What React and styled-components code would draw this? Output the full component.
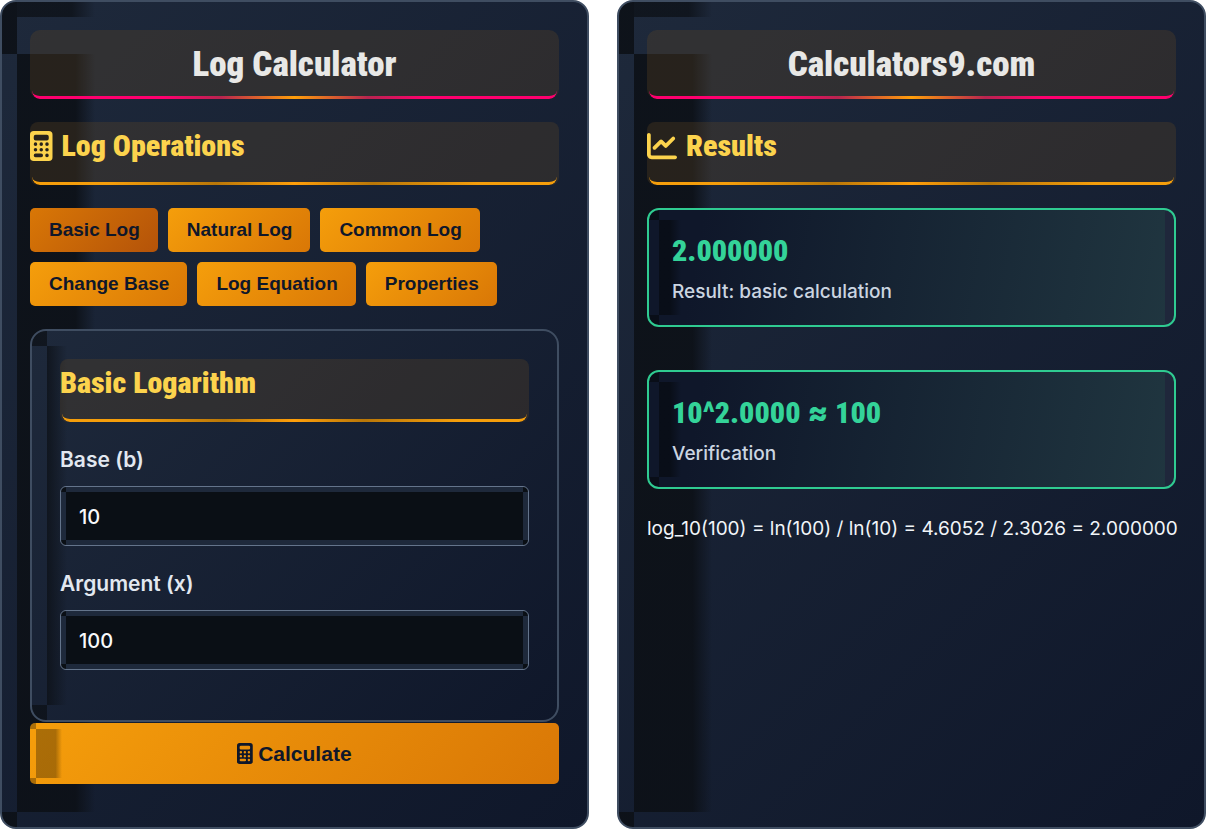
import React, { useState } from "react";
import styled, { createGlobalStyle, css } from "styled-components";

import { FaChartLine } from "react-icons/fa6";

const tabs = [
  "Basic Log",
  "Natural Log",
  "Common Log",
  "Change Base",
  "Log Equation",
  "Properties",
];

function solve(base, argument) {
  const top = Math.log(argument);
  const bottom = Math.log(base);
  return { base, argument, top, bottom, value: top / bottom };
}

function CalculatorIcon() {
  return (
    <NarrowIcon viewBox="0 0 384 512" fill="currentColor" aria-hidden="true">
      <path
        fillRule="evenodd"
        d="M64 0h256a64 64 0 0 1 64 64v384a64 64 0 0 1-64 64H64a64 64 0 0 1-64-64V64A64 64 0 0 1 64 0zM96 64a32 32 0 0 0-32 32v32a32 32 0 0 0 32 32h192a32 32 0 0 0 32-32V96a32 32 0 0 0-32-32zM64 224a30 30 0 1 0 60 0a30 30 0 1 0-60 0zM162 224a30 30 0 1 0 60 0a30 30 0 1 0-60 0zM260 224a30 30 0 1 0 60 0a30 30 0 1 0-60 0zM64 320a30 30 0 1 0 60 0a30 30 0 1 0-60 0zM162 320a30 30 0 1 0 60 0a30 30 0 1 0-60 0zM260 320a30 30 0 1 0 60 0a30 30 0 1 0-60 0zM94 386h98a30 30 0 0 1 0 60H94a30 30 0 0 1 0-60zM260 416a30 30 0 1 0 60 0a30 30 0 1 0-60 0z"
      />
    </NarrowIcon>
  );
}

function App() {
  const [tab, setTab] = useState(tabs[0]);
  const [base, setBase] = useState("10");
  const [argument, setArgument] = useState("100");
  const [result, setResult] = useState(solve(10, 100));

  const calculate = (e) => {
    e.preventDefault();
    setResult(solve(Number(base), Number(argument)));
  };

  return (
    <Page>
      <GlobalStyle />
      <Panel>
        <Title>Log Calculator</Title>
        <SectionTitle>
          <CalculatorIcon />
          <span>Log Operations</span>
        </SectionTitle>
        <Tabs>
          {tabs.map((name) => (
            <Tab
              key={name}
              type="button"
              $active={name === tab}
              onClick={() => setTab(name)}
            >
              {name}
            </Tab>
          ))}
        </Tabs>
        <form onSubmit={calculate}>
          <FormCard>
            <SectionTitle as="h3">Basic Logarithm</SectionTitle>
            <Field>
              <Label htmlFor="base">Base (b)</Label>
              <Input
                id="base"
                value={base}
                onChange={(e) => setBase(e.target.value)}
              />
            </Field>
            <Field>
              <Label htmlFor="argument">Argument (x)</Label>
              <Input
                id="argument"
                value={argument}
                onChange={(e) => setArgument(e.target.value)}
              />
            </Field>
          </FormCard>
          <CalculateButton type="submit">
            <CalculatorIcon />
            <span>Calculate</span>
          </CalculateButton>
        </form>
      </Panel>

      <Panel>
        <Title>Calculators9.com</Title>
        <SectionTitle>
          <FaChartLine />
          <span>Results</span>
        </SectionTitle>
        <Cards>
          <ResultCard>
            <Value>{result.value.toFixed(6)}</Value>
            <Caption>Result: basic calculation</Caption>
          </ResultCard>
          <ResultCard>
            <Value>
              {`${result.base}^${result.value.toFixed(4)} `}
              <Sign>≈</Sign>
              {` ${result.argument}`}
            </Value>
            <Caption>Verification</Caption>
          </ResultCard>
        </Cards>
        <Steps>
          {`log_${result.base}(${result.argument}) = ln(${result.argument}) / ln(${result.base}) = ${result.top.toFixed(4)} / ${result.bottom.toFixed(4)} = ${result.value.toFixed(6)}`}
        </Steps>
      </Panel>
    </Page>
  );
}

export default App;

const GlobalStyle = createGlobalStyle`
  * {
    box-sizing: border-box;
  }
  body {
    margin: 0;
    background: white;
    font-family: Inter, sans-serif;
  }
  h2, h3, p {
    margin: 0;
  }
`;

const NarrowIcon = styled.svg`
  flex: none;
  height: 1em;
  aspect-ratio: 3 / 4;
`;

const condensed = css`
  font-family: "Roboto Condensed", "Liberation Sans Narrow", Roboto, sans-serif;
  font-weight: 900;
`;

/* thin curved line along the bottom edge of a rounded heading */
const underline = css`
  position: relative;
  &::after {
    content: "";
    position: absolute;
    inset: 0 2px;
    border-bottom: 3px solid transparent;
    border-radius: 0 0 8px 8px;
    background: ${(props) => props.$line} border-box;
    mask:
      linear-gradient(#000 0 0) padding-box exclude,
      linear-gradient(#000 0 0) border-box;
    pointer-events: none;
  }
`;

const Page = styled.main`
  display: grid;
  grid-template-columns: repeat(2, minmax(0, 1fr));
  gap: 28px;
  @media only screen and (max-width: 900px) {
    grid-template-columns: 1fr;
  }
`;

const Panel = styled.section`
  padding: 28px 28px 43px;
  border: 2px solid #3f4d61;
  border-radius: 16px;
  background:
    linear-gradient(90deg, #0c1016e0 75%, #0c101600) 15px 52px / 78px
      calc(100% - 67px) no-repeat,
    linear-gradient(#0c1016e0, #0c1016e0) 0 0 / 15px 52px no-repeat,
    linear-gradient(90deg, #0c1016c0 70%, #0c101600) 15px 0 / 78px 15px
      no-repeat,
    linear-gradient(#0c1016e0, #0c1016e0) 0 100% / 15px 15px no-repeat,
    linear-gradient(135deg, #1e293b, #0f172a);
`;

const Title = styled.h2.attrs({
  $line:
    "linear-gradient(90deg, #ff006e 25%, #b8244f 36%, #ff9f0a 50%, #b8244f 64%, #ff006e 75%)",
})`
  ${condensed}
  ${underline}
  padding: 14px 0 13px;
  border-radius: 10px;
  margin-bottom: 23px;
  background: rgba(105, 75, 35, 0.28);
  color: #e8e8e6;
  font-size: 35px;
  line-height: 42px;
  text-align: center;
`;

const SectionTitle = styled.h2.attrs({
  $line:
    "linear-gradient(90deg, #f59e0b 15%, #b97708 35%, #ff9f0a 50%, #b97708 65%, #f59e0b 85%)",
})`
  ${condensed}
  ${underline}
  display: flex;
  align-items: center;
  gap: 9px;
  padding: 5px 0 20px;
  border-radius: 8px;
  margin-bottom: 23px;
  background: rgba(105, 75, 35, 0.28);
  color: #fcd34d;
  font-size: 30px;
  line-height: 38px;
`;

const Tabs = styled.div`
  display: flex;
  flex-wrap: wrap;
  gap: 10px;
  margin-bottom: 23px;
`;

const Tab = styled.button`
  padding: 10px 18px 10px 19px;
  border: none;
  border-radius: 5px;
  background: ${(props) =>
    props.$active
      ? "linear-gradient(135deg, #d97706, #b45309)"
      : "linear-gradient(135deg, #f59e0b, #d97706)"};
  color: #0f172a;
  font: bold 19px/24px "Liberation Sans", Arial, sans-serif;
  cursor: pointer;
`;

const FormCard = styled.div`
  padding: 28px 28px 50px;
  border: 2px solid #3f4d61;
  border-radius: 16px;
  margin-bottom: 1px;
  background:
    linear-gradient(90deg, #0c1016c0, #0c101600) 15px 15px / 20px
      calc(100% - 30px) no-repeat,
    linear-gradient(#0c1016c0, #0c1016c0) 0 0 / 15px 15px no-repeat,
    linear-gradient(#0c1016c0, #0c1016c0) 0 100% / 15px 15px no-repeat,
    linear-gradient(135deg, #1e293b, #0f172a);
`;

const Field = styled.div`
  & + & {
    margin-top: 23px;
  }
`;

const Label = styled.label`
  display: block;
  margin-bottom: 11px;
  color: #e2e8f0;
  font-size: 21px;
  font-weight: 600;
  line-height: 30px;
`;

const Input = styled.input`
  display: block;
  width: 100%;
  padding: 17px 18px 15px;
  border: 1px solid #64748b;
  border-radius: 6px;
  outline: none;
  background:
    linear-gradient(#0a0f15, #0a0f15) center / calc(100% - 10px)
      calc(100% - 10px) no-repeat,
    linear-gradient(#0a0f15, #0a0f15) 0 0 / 5px 5px no-repeat,
    linear-gradient(#0a0f15, #0a0f15) 100% 0 / 5px 5px no-repeat,
    linear-gradient(#0a0f15, #0a0f15) 0 100% / 5px 5px no-repeat,
    linear-gradient(#0a0f15, #0a0f15) 100% 100% / 5px 5px no-repeat,
    #1e293b;
  color: #f8fafc;
  font: 500 20px/26px Inter, sans-serif;
`;

const CalculateButton = styled.button`
  display: flex;
  align-items: center;
  justify-content: center;
  gap: 5px;
  width: 100%;
  padding: 17px;
  border: none;
  border-radius: 5px;
  background:
    linear-gradient(90deg, #0000004d 75%, #00000000) 6px 6px / 26px
      calc(100% - 12px) no-repeat,
    linear-gradient(#0000004d, #0000004d) 0 0 / 6px 6px no-repeat,
    linear-gradient(#0000004d, #0000004d) 0 100% / 6px 6px no-repeat,
    linear-gradient(135deg, #f59e0b, #d97706);
  color: #0f172a;
  font: bold 21px/27px "Liberation Sans", Arial, sans-serif;
  cursor: pointer;
`;

const Cards = styled.div`
  display: grid;
  gap: 43px;
  margin-bottom: 24px;
`;

const ResultCard = styled.div`
  padding: 21px 23px 18px;
  border: 2px solid #2fcb91;
  border-radius: 12px;
  background:
    linear-gradient(90deg, #070b12c0 50%, #070b1200) 10px 10px / 22px
      calc(100% - 20px) no-repeat,
    linear-gradient(#070b12c0, #070b12c0) 0 0 / 10px 10px no-repeat,
    linear-gradient(#070b12c0, #070b12c0) 0 100% / 10px 10px no-repeat,
    linear-gradient(#1f273b, #1f273b) 100% 0 / 9px 100% no-repeat,
    linear-gradient(100deg, #0f172a 10%, #203640);
`;

const Value = styled.p`
  ${condensed}
  color: #34d399;
  font-size: 30px;
  line-height: 40px;
`;

const Sign = styled.span`
  font-family: Inter, sans-serif;
  line-height: 1;
`;

const Caption = styled.p`
  margin-top: 6px;
  color: #cbd5e1;
  font-size: 19px;
  font-weight: 500;
  line-height: 30px;
`;

const Steps = styled.p`
  color: #f1f5f9;
  font-size: 19px;
  line-height: 32px;
  white-space: nowrap;
  @media only screen and (max-width: 1200px) {
    white-space: normal;
  }
`;
